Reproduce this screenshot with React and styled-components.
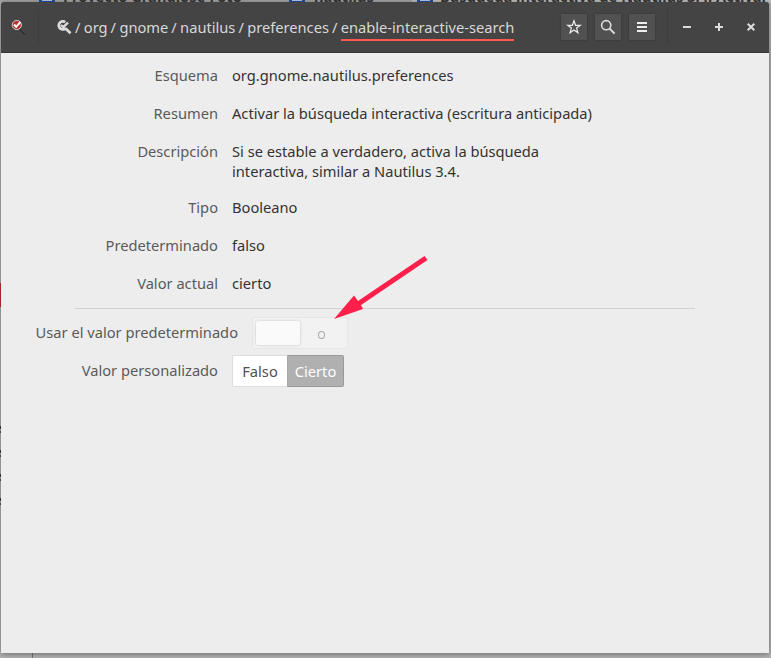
import React from "react";
import styled, { createGlobalStyle } from "styled-components";

const Global = createGlobalStyle`
  * { box-sizing: border-box; }
  body { margin: 0; overflow: hidden; font-family: "Noto Sans", sans-serif; font-size: 14.67px; line-height: 20px; }
`;

const Desktop = styled.div`
  position: relative;
  width: 771px;
  height: 658px;
  padding: 2px 2px 5px 1px;
  background: #b4b4b4;
  overflow: hidden;
`;

const Strip = styled.div`
  position: absolute;
  top: ${(p) => p.$top}px;
  left: ${(p) => p.$left}px;
  width: ${(p) => p.$w}px;
  height: ${(p) => p.$h}px;
  background: ${(p) => p.$fill};
`;

const TabText = styled.div`
  position: absolute;
  top: -13px;
  left: ${(p) => p.$left}px;
  width: ${(p) => p.$w}px;
  font-size: 14.67px;
  font-weight: 700;
  line-height: 18px;
  color: #383838;
  white-space: nowrap;
`;

const Window = styled.div`
  position: relative;
  width: 768px;
  height: 651px;
  background: #ededed;
  border-radius: 2px 2px 0 0;
  box-shadow: 0 1px 6px rgba(0, 0, 0, 0.42);
`;

const Header = styled.header`
  height: 51px;
  display: flex;
  align-items: center;
  background: #444;
  border-bottom: 1px solid #383434;
  border-radius: 2px 2px 0 0;
  color: #d8d8d8;
`;

const AppIcon = styled.div`
  width: 38px;
  height: 34px;
  border-right: 1px solid #3e3e3e;
  svg { display: block; margin: 9px 0 0 10px; }
`;

const Path = styled.nav`
  display: flex;
  align-items: center;
  flex: 1;
  padding-left: 18px;
`;

const Crumb = styled.span`
  white-space: pre;
  line-height: 20px;
  height: 24px;
  margin-top: 4px;
  border-bottom: 2px solid ${(p) => (p.$active ? "#fc5a50" : "transparent")};
`;

const Slash = styled.span`
  width: 11.8px;
  padding-left: 3px;
`;

const Tools = styled.div`
  display: flex;
  gap: 8px;
  padding-right: 12px;
  border-right: 1px solid #3c3c3c;
  height: 34px;
  align-items: center;
`;

const ToolButton = styled.button`
  width: 26px;
  height: 26px;
  display: flex;
  align-items: center;
  justify-content: center;
  padding: 0;
  border: 0;
  background: #515151;
  box-shadow: 0 0 2px rgba(0, 0, 0, 0.3);
`;

const WindowControls = styled.div`
  display: flex;
  gap: 16px;
  padding: 0 10px 0 11px;
`;

const Details = styled.dl`
  margin: 0;
  padding: 12px 0 0;
  display: grid;
  grid-template-columns: 217px 320px;
  column-gap: 14px;
  row-gap: 18px;
`;

const Label = styled.dt`
  text-align: right;
  color: #5a5a5a;
`;

const Value = styled.dd`
  margin: 0;
  color: #333;
  white-space: pre;
  height: ${(p) => (p.$tall ? 38 : 20)}px;
`;

const Divider = styled.hr`
  width: 620px;
  height: 1px;
  margin: 15px 0 8px 74px;
  border: 0;
  background: #d2d2d2;
`;

const Setting = styled.div`
  display: flex;
  align-items: center;
  height: 32px;
  margin-bottom: 6px;
`;

const SettingLabel = styled.div`
  width: ${(p) => p.$width}px;
  margin: -2px 14px 0 0;
  text-align: right;
  white-space: nowrap;
  color: #5a5a5a;
`;

const Switch = styled.div`
  width: 96px;
  height: 32px;
  padding: 3px;
  display: flex;
  background: #f2f2f2;
  border: 1px solid #e6e6e6;
  border-radius: 2px;
`;

const Knob = styled.div`
  width: 44px;
  height: 24px;
  background: #fafafa;
  border-radius: 2px;
  box-shadow: 0 0 3px rgba(0, 0, 0, 0.18);
`;

const OffMark = styled.div`
  width: 7px;
  height: 8px;
  margin: 10px 0 0 18px;
  border: 1px solid #a6a8b0;
  border-radius: 50%;
`;

const Choice = styled.button`
  width: ${(p) => p.$width}px;
  height: 32px;
  padding: 0;
  font: inherit;
  color: ${(p) => (p.$active ? "#fff" : "#505050")};
  background: ${(p) => (p.$active ? "#b0b0b0" : "#fff")};
  border: 1px solid ${(p) => (p.$active ? "#999" : "#dedede")};
  border-radius: ${(p) => (p.$active ? "0 2px 2px 0" : "2px 0 0 2px")};
  border-left-color: ${(p) => (p.$active ? "#a7a7a7" : "#dedede")};
  ${(p) => !p.$active && "border-right: 0;"}
`;

const Arrow = styled.svg`
  position: absolute;
  left: 330px;
  top: 250px;
  pointer-events: none;
`;

const tabs = [
  [63, 190, "Proyecto Grandiose Foto"],
  [259, 14, "×"],
  [314, 70, "nautilus"],
  [387, 14, "×"],
  [440, 331, "Búsqueda interactiva de Nautilus 3.4. Activar"],
];

const rows = [
  ["Esquema", "org.gnome.nautilus.preferences"],
  ["Resumen", "Activar la búsqueda interactiva (escritura anticipada)"],
  ["Descripción", "Si se estable a verdadero, activa la búsqueda\ninteractiva, similar a Nautilus 3.4."],
  ["Tipo", "Booleano"],
  ["Predeterminado", "falso"],
  ["Valor actual", "cierto"],
];

export default function App() {
  return (
    <>
      <Global />
      <Desktop>
        <Strip $top={0} $left={0} $w={771} $h={2} $fill="#a6a6a6" />
        <Strip $top={0} $left={412} $w={359} $h={2} $fill="#c0c0c0" />
        {tabs.map(([x, w, t]) => <TabText key={x} $left={x} $w={w}>{t}</TabText>)}
        {[39, 289, 417].map((x) => (
          <React.Fragment key={x}>
            <Strip $top={0} $left={x} $w={16} $h={2} $fill="#234f9e" />
            <Strip $top={0} $left={x + 3} $w={10} $h={1} $fill="#b9cbe6" />
          </React.Fragment>
        ))}
        <Strip $top={653} $left={32} $w={1} $h={5} $fill="#777" />
        <Window>
          <Header>
            <AppIcon>
              <svg width="17" height="18" viewBox="0 0 17 18">
                <path d="M9 10l5 5" stroke="#292929" strokeWidth="2" />
                <path d="M9.4 9.6l4.8 4.8" stroke="#777" strokeWidth=".6" />
                <circle cx="5.8" cy="6" r="4.6" fill="#b92f2f" stroke="#ddd" strokeWidth=".9" />
                <path d="M3 5.5l2.2 2.3L9.4 3" fill="none" stroke="#fff" strokeWidth="2" />
              </svg>
            </AppIcon>
            <Path>
              <svg width="15" height="15" viewBox="0 0 15 15" fill="none" stroke="#ddd">
                <path d="M8.2 2.2A4 4 0 1 0 9 7.8M8.6 8.6l4.9 4.6" strokeWidth="2.7" />
                <path d="M3.9 5l2.3 2.2L11 2.6" strokeWidth="2.4" />
              </svg>
              {["org", "gnome", "nautilus", "preferences", "enable-interactive-search"].map((c, i) => (
                <React.Fragment key={c}><Slash>/</Slash><Crumb $active={i === 4}>{c}</Crumb></React.Fragment>
              ))}
            </Path>
            <Tools>
              <ToolButton><svg width="16" height="16" viewBox="0 0 16 16" fill="none" stroke="#eee" strokeWidth="1.2"><path d="M8 1.8l1.6 4.5h4.7L10.6 9l1.3 4.8L8 11l-3.9 2.8L5.4 9 1.7 6.3h4.7z" /></svg></ToolButton>
              <ToolButton><svg width="16" height="16" viewBox="0 0 16 16" fill="none" stroke="#ddd"><circle cx="6.2" cy="6.2" r="4.6" strokeWidth="1.6" /><path d="M9.6 9.6l5 5" strokeWidth="2" /></svg></ToolButton>
              <ToolButton><svg width="16" height="16" viewBox="0 0 16 16" fill="#eee"><path d="M3 3h10v2H3zM3 7h10v2H3zM3 11h10v2H3z" /></svg></ToolButton>
            </Tools>
            <WindowControls>
              <svg width="16" height="16" viewBox="0 0 16 16" fill="#ddd"><path d="M4 7h8v2H4z" /></svg>
              <svg width="16" height="16" viewBox="0 0 16 16" fill="#ddd"><path d="M4 7h3V4h2v3h3v2H9v3H7V9H4z" /></svg>
              <svg width="16" height="16" viewBox="0 0 16 16" stroke="#ddd" strokeWidth="2"><path d="M4.7 4.7l6.6 6.6M11.3 4.7l-6.6 6.6" /></svg>
            </WindowControls>
          </Header>
          <Details>
            {rows.map(([l, v]) => <React.Fragment key={l}><Label>{l}</Label><Value $tall={l === "Descripción"}>{v}</Value></React.Fragment>)}
          </Details>
          <Divider />
          <Setting><SettingLabel $width={237}>Usar el valor predeterminado</SettingLabel><Switch><Knob /><OffMark /></Switch></Setting>
          <Setting><SettingLabel $width={217}>Valor personalizado</SettingLabel><Choice $width={55}>Falso</Choice><Choice $width={57} $active>Cierto</Choice></Setting>
        </Window>
        <Strip $top={283} $left={0} $w={1} $h={24} $fill="#a42626" />
        {[426, 450, 474, 498].map((y) => (
          <React.Fragment key={y}>
            <Strip $top={y} $left={0} $w={1} $h={3} $fill="#333" />
            <Strip $top={y + 5} $left={0} $w={1} $h={2} $fill="#444" />
          </React.Fragment>
        ))}
        <Arrow width="110" height="75" viewBox="330 250 110 75" fill="#ff1f4b">
          <path d="M334 319L354 295.5L358 301L424.5 256L427.5 260L361 305L363 309z" />
        </Arrow>
      </Desktop>
    </>
  );
}
